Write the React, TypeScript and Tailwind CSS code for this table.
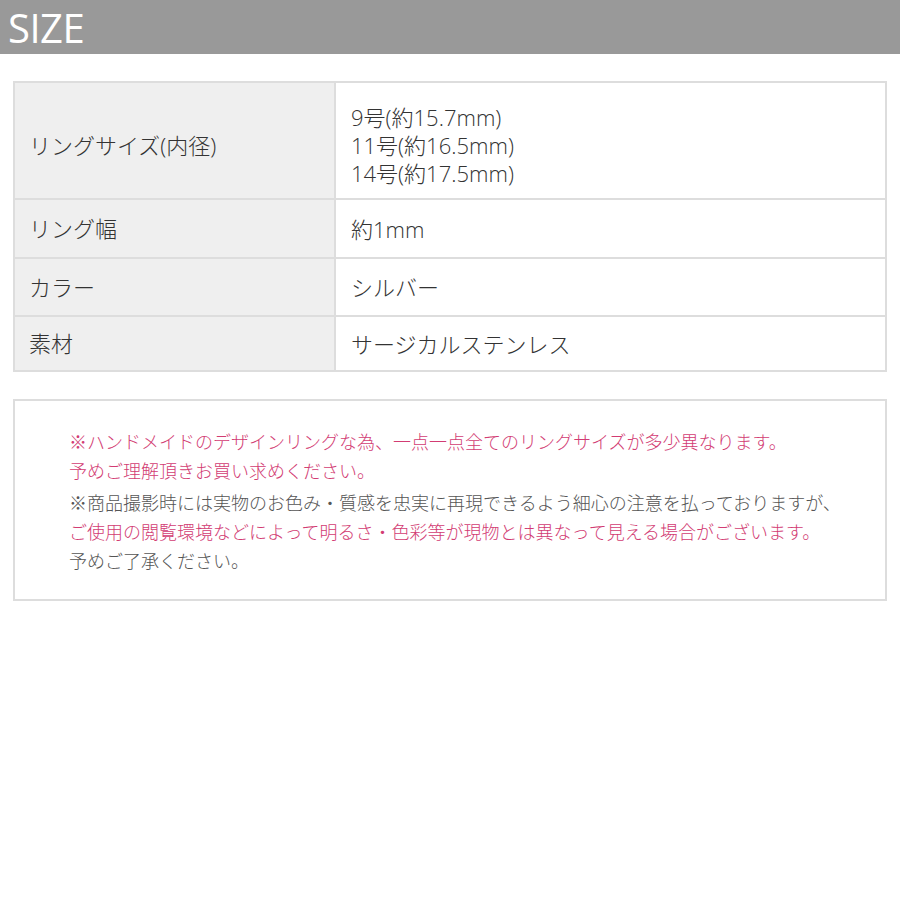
import React from 'react'

const rows = [
  { label: 'リングサイズ(内径)', values: ['9号(約15.7mm)', '11号(約16.5mm)', '14号(約17.5mm)'], h: 'h-[115px]', pad: 'pt-[9px]' },
  { label: 'リング幅', values: ['約1mm'], h: 'h-[59px]', pad: '' },
  { label: 'カラー', values: ['シルバー'], h: 'h-[58px]', pad: '' },
  { label: '素材', values: ['サージカルステンレス'], h: 'h-[55px]', pad: '' },
]

export default function App() {
  return (
    <div className="w-[900px] h-[900px] bg-white font-['Open_Sans','Noto_Sans_CJK_JP',sans-serif]">
      <div className="h-[54px] bg-[#999999] flex items-center pl-[8px]">
        <h1 className="text-white text-[40px] font-medium leading-none tracking-[-0.5px] mt-[2px]">SIZE</h1>
      </div>

      <div className="mx-[13px] mt-[27px] border-2 border-[#dddddd] text-[22px] font-light text-[#333333]">
        {rows.map((row, i) => (
          <div key={row.label} className={`flex ${i > 0 ? 'border-t-2 border-[#dddddd]' : ''} ${row.h}`}>
            <div className={`w-[321px] shrink-0 bg-[#efefef] border-r-2 border-[#dddddd] flex items-center pl-[14px] ${row.pad}`}>
              {row.label}
            </div>
            <div className={`flex flex-col justify-center pl-[15px] leading-[28px] ${row.pad}`}>
              {row.values.map((v) => (
                <span key={v}>{v}</span>
              ))}
            </div>
          </div>
        ))}
      </div>

      <div className="mx-[13px] mt-[27px] h-[202px] border-2 border-[#dddddd] pl-[54px] pt-[27px] text-[18px] font-light leading-[29px] text-[#555555]">
        <p className="text-[#d23c73]">
          ※ハンドメイドのデザインリングな為、一点一点全てのリングサイズが多少異なります。
          <br />
          予めご理解頂きお買い求めください。
        </p>
        <p className="mt-[3px]">
          ※商品撮影時には実物のお色み・質感を忠実に再現できるよう細心の注意を払っておりますが、
          <br />
          <span className="text-[#d23c73]">ご使用の閲覧環境などによって明るさ・色彩等が現物とは異なって見える場合がございます。</span>
          <br />
          予めご了承ください。
        </p>
      </div>
    </div>
  )
}
